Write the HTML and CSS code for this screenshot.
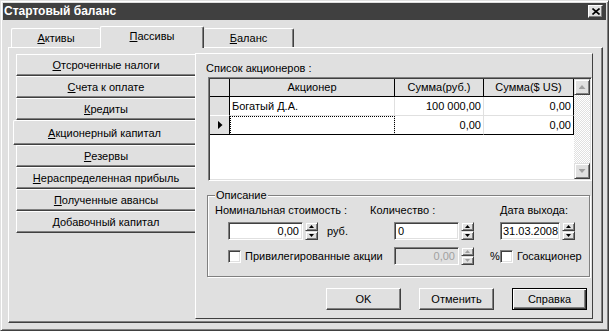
FILE: index.html
```html
<!DOCTYPE html>
<html lang="ru">
<head>
    <meta charset="UTF-8">
    <meta name="viewport" content="width=device-width, initial-scale=1.0">
    <title>Стартовый баланс</title>
    <link rel="stylesheet" href="styles.css">
</head>
<body>
    <div class="window">
        <div class="titlebar">
            <span class="title">Стартовый баланс</span>
            <span class="close">
                <svg width="8" height="7" viewBox="0 0 8 7"><path d="M0.5 0.5 L7.5 6.5 M7.5 0.5 L0.5 6.5" stroke="#000" stroke-width="1.6" fill="none"/></svg>
            </span>
        </div>

        <div class="tabs">
            <div class="tab tab-first"><u>А</u>ктивы</div>
            <div class="tab active"><u>П</u>ассивы</div>
            <div class="tab tab-last"><u>Б</u>аланс</div>
        </div>

        <div class="tabpanel">
            <div class="nav">
                <div class="navbtn"><u>О</u>тсроченные налоги</div>
                <div class="navbtn"><u>С</u>чета к оплате</div>
                <div class="navbtn"><u>К</u>редиты</div>
                <div class="navbtn selected"><u>А</u>кционерный капитал</div>
                <div class="navbtn"><u>Р</u>езервы</div>
                <div class="navbtn"><u>Н</u>ераспределенная прибыль</div>
                <div class="navbtn"><u>П</u>олученные авансы</div>
                <div class="navbtn"><u>Д</u>обавочный капитал</div>
            </div>

            <div class="content">
                <div class="caption">Список акционеров :</div>

                <div class="grid">
                    <div class="grid-body">
                        <div class="grid-row head">
                            <div class="cell ind"></div>
                            <div class="cell c-name">Акционер</div>
                            <div class="cell c-rub">Сумма(руб.)</div>
                            <div class="cell c-usd">Сумма($ US)</div>
                        </div>
                        <div class="grid-row">
                            <div class="cell ind"></div>
                            <div class="cell c-name">Богатый Д.А.</div>
                            <div class="cell c-rub num">100 000,00</div>
                            <div class="cell c-usd num">0,00</div>
                        </div>
                        <div class="grid-row last">
                            <div class="cell ind"><span class="pointer"></span></div>
                            <div class="cell c-name focus"></div>
                            <div class="cell c-rub num">0,00</div>
                            <div class="cell c-usd num">0,00</div>
                        </div>
                    </div>
                    <div class="vscroll">
                        <div class="sbtn"><span class="arrow-up"></span></div>
                        <div class="strack"></div>
                        <div class="sbtn"><span class="arrow-down"></span></div>
                    </div>
                </div>

                <fieldset class="group">
                    <legend>Описание</legend>
                    <div class="form">
                        <div class="label">Номинальная стоимость :</div>
                        <div class="label">Количество :</div>
                        <div class="label">Дата выхода:</div>

                        <div class="field indent-1">
                            <div class="edit w-nominal num">0,00</div>
                            <div class="spin"><span class="up"></span><span class="down"></span></div>
                            <span class="unit">руб.</span>
                        </div>
                        <div class="field indent-2">
                            <div class="edit w-count">0</div>
                            <div class="spin"><span class="up"></span><span class="down"></span></div>
                        </div>
                        <div class="field">
                            <div class="edit w-date">31.03.2008</div>
                            <div class="spin"><span class="up"></span><span class="down"></span></div>
                        </div>

                        <div class="field indent-1 row3">
                            <span class="check"></span>
                            <span class="check-label">Привилегированные акции</span>
                        </div>
                        <div class="field indent-2 row3">
                            <div class="edit w-count num disabled">0,00</div>
                            <div class="spin disabled"><span class="up"></span><span class="down"></span></div>
                            <span class="percent">%</span>
                        </div>
                        <div class="field row3">
                            <span class="check"></span>
                            <span class="check-label">Госакционер</span>
                        </div>
                    </div>
                </fieldset>

                <div class="actions">
                    <div class="button">OK</div>
                    <div class="button">Отменить</div>
                    <div class="button default">Справка</div>
                </div>
            </div>
        </div>
    </div>
</body>
</html>
```

FILE: styles.css
```css
* {
    box-sizing: border-box;
}
body {
    margin: 0;
    background-color: #e0e0e0;
    font-family: "Liberation Sans", Arial, sans-serif;
    font-size: 11px;
    line-height: 13px;
    color: #000;
}
u {
    text-decoration: underline;
    text-underline-offset: 1px;
}

/* window frame */
.window {
    width: 609px;
    height: 331px;
    padding: 2px;
    background-color: #e0e0e0;
    border: 1px solid;
    border-color: #e0e0e0 #404040 #404040 #e0e0e0;
    box-shadow: inset 1px 1px #fff, inset -1px -1px #808080;
    display: flex;
    flex-direction: column;
}
.titlebar {
    height: 17px;
    background-color: #404040;
    display: flex;
    align-items: center;
    padding-left: 1px;
}
.title {
    color: #fff;
    font-weight: bold;
    font-size: 12px;
}
.close {
    margin-left: auto;
    margin-right: 3px;
    width: 15px;
    height: 13px;
    border: 1px solid;
    border-color: #fff #404040 #404040 #fff;
    box-shadow: inset -1px -1px #808080;
    background-color: #e0e0e0;
    display: flex;
    align-items: center;
    justify-content: center;
}
.close svg {
    display: block;
}

/* tabs */
.tabs {
    margin-top: 6px;
    height: 21px;
    padding-left: 8px;
    display: flex;
    align-items: flex-end;
}
.tab {
    height: 19px;
    display: flex;
    align-items: center;
    justify-content: center;
    border-top: 1px solid #fff;
    border-left: 1px solid #fff;
    border-radius: 2px 2px 0 0;
    padding-top: 1px;
}
.tab-first {
    width: 89px;
}
.tab-last {
    width: 90px;
    border-left: none;
    border-right: 1px solid #404040;
    box-shadow: inset -1px 0 #808080;
}
.tab.active {
    width: 104px;
    height: 22px;
    margin-bottom: -1px;
    padding-top: 0;
    padding-bottom: 2px;
    position: relative;
    z-index: 1;
    background-color: #e0e0e0;
    border-right: 1px solid #404040;
    box-shadow: inset -1px 0 #808080;
}

/* tab page */
.tabpanel {
    flex: 1;
    margin: 0 3px 5px 5px;
    border: 1px solid;
    border-color: #fff #404040 #404040 #fff;
    box-shadow: inset -1px -1px #808080;
    display: flex;
    padding-top: 5px;
}
.nav {
    width: 186px;
    padding: 1px 0 0 7px;
    display: flex;
    flex-direction: column;
}
.navbtn {
    height: 22px;
    display: flex;
    align-items: center;
    justify-content: center;
    border-top: 1px solid #fff;
    border-left: 1px solid #fff;
    border-bottom: 1px solid #404040;
    box-shadow: inset 0 -1px #808080;
    padding-top: 1px;
    white-space: nowrap;
}
.navbtn.selected {
    height: 25px;
    margin-left: -3px;
    border-radius: 2px 0 0 0;
}

.content {
    width: 398px;
    height: 266px;
    border: 1px solid;
    border-color: #fff #404040 #404040 #fff;
    display: flex;
    flex-direction: column;
}
.caption {
    margin: 8px 0 0 10px;
}

/* shareholders grid */
.grid {
    margin: 2px 0 0 12px;
    width: 384px;
    height: 104px;
    padding: 1px;
    border: 1px solid;
    border-color: #808080 #fff #fff #808080;
    box-shadow: inset 1px 1px #404040, inset -1px -1px #e0e0e0;
    display: flex;
}
.grid-body {
    width: 364px;
    background-color: #fff;
}
.grid-row {
    height: 19px;
    display: flex;
}
.grid-row.head {
    height: 18px;
    background-color: #e0e0e0;
    border-bottom: 1px solid #000;
}
.cell {
    height: 100%;
    display: flex;
    align-items: center;
    padding: 0 2px;
    border-right: 1px solid #e0e0e0;
    border-bottom: 1px solid #e0e0e0;
    white-space: nowrap;
}
.head .cell {
    justify-content: center;
    border-bottom: none;
    border-right-color: #000;
}
.grid-row.last .cell {
    border-bottom-color: #000;
}
.cell.ind {
    width: 20px;
    background-color: #e0e0e0;
    border-right-color: #000;
    border-bottom-color: #fff;
    justify-content: center;
}
.cell.c-name {
    width: 165px;
}
.cell.c-rub {
    width: 89px;
}
.cell.c-usd {
    width: 90px;
    border-right-color: #000;
}
.cell.num {
    justify-content: flex-end;
}
.cell.focus {
    outline: 1px dotted #000;
    outline-offset: -1px;
}
.pointer {
    width: 5px;
    height: 9px;
    background-color: #000;
    clip-path: polygon(0 0, 100% 50%, 0 100%);
    margin-left: 1px;
}

.vscroll {
    width: 16px;
    display: flex;
    flex-direction: column;
}
.sbtn {
    height: 16px;
    border: 1px solid;
    border-color: #e0e0e0 #404040 #404040 #e0e0e0;
    box-shadow: inset 1px 1px #fff, inset -1px -1px #808080;
    background-color: #e0e0e0;
    display: flex;
    align-items: center;
    justify-content: center;
}
.strack {
    flex: 1;
    background: repeating-conic-gradient(#fff 0 25%, #e0e0e0 0 50%) 0 0 / 2px 2px;
}
.arrow-up,
.arrow-down {
    width: 7px;
    height: 4px;
    background-color: #a0a0a0;
    filter: drop-shadow(1px 1px 0 #fff);
}
.arrow-up {
    clip-path: polygon(50% 0, 100% 100%, 0 100%);
}
.arrow-down {
    clip-path: polygon(0 0, 100% 0, 50% 100%);
}

/* description group */
.group {
    margin: 8px 0 0 11px;
    width: 383px;
    padding: 2px 0 11px 7px;
    border: 1px solid #808080;
    box-shadow: inset 1px 1px #fff, 1px 1px #fff;
    min-width: 0;
}
.group legend {
    padding: 0 1px;
    background-color: #e0e0e0;
}
.form {
    display: grid;
    grid-template-columns: 155px 130px 1fr;
}
.label {
    white-space: nowrap;
}
.field {
    display: flex;
    align-items: center;
    margin-top: 5px;
    white-space: nowrap;
}
.field.row3 {
    margin-top: 7px;
}
.indent-1 {
    padding-left: 13px;
}
.indent-2 {
    padding-left: 24px;
}
.edit {
    height: 18px;
    padding: 0 3px;
    background-color: #fff;
    border: 1px solid;
    border-color: #808080 #fff #fff #808080;
    box-shadow: inset 1px 1px #404040, inset -1px -1px #e0e0e0;
    display: flex;
    align-items: center;
    white-space: nowrap;
}
.edit.num {
    justify-content: flex-end;
}
.edit.disabled {
    background-color: #e0e0e0;
    color: #a0a0a0;
}
.w-nominal {
    width: 75px;
}
.w-count {
    width: 65px;
}
.w-date {
    width: 60px;
    padding: 0 2px;
}
.spin {
    margin-left: 2px;
    width: 13px;
    height: 18px;
    display: flex;
    flex-direction: column;
}
.spin span {
    flex: 1;
    border: 1px solid;
    border-color: #e0e0e0 #404040 #404040 #e0e0e0;
    box-shadow: inset 1px 1px #fff, inset -1px -1px #808080;
    display: flex;
    align-items: center;
    justify-content: center;
}
.spin span::after {
    content: "";
    width: 5px;
    height: 3px;
    background-color: #000;
}
.spin .up::after {
    clip-path: polygon(50% 0, 100% 100%, 0 100%);
}
.spin .down::after {
    clip-path: polygon(0 0, 100% 0, 50% 100%);
}
.spin.disabled span::after {
    background-color: #a0a0a0;
}
.unit {
    margin-left: 9px;
}
.percent {
    margin-left: 16px;
}
.check {
    flex: none;
    width: 13px;
    height: 13px;
    background-color: #fff;
    border: 1px solid;
    border-color: #808080 #fff #fff #808080;
    box-shadow: inset 1px 1px #404040, inset -1px -1px #e0e0e0;
}
.check-label {
    margin-left: 4px;
}

/* dialog buttons */
.actions {
    margin-top: 11px;
    padding-right: 5px;
    display: flex;
    justify-content: flex-end;
    gap: 18px;
}
.button {
    width: 75px;
    height: 22px;
    display: flex;
    align-items: center;
    justify-content: center;
    border: 1px solid;
    border-color: #fff #404040 #404040 #fff;
    box-shadow: inset -1px -1px #808080;
}
.button.default {
    border-color: #000;
    box-shadow: inset 1px 1px #fff, inset -1px -1px #404040, inset -2px -2px #808080;
}
```
